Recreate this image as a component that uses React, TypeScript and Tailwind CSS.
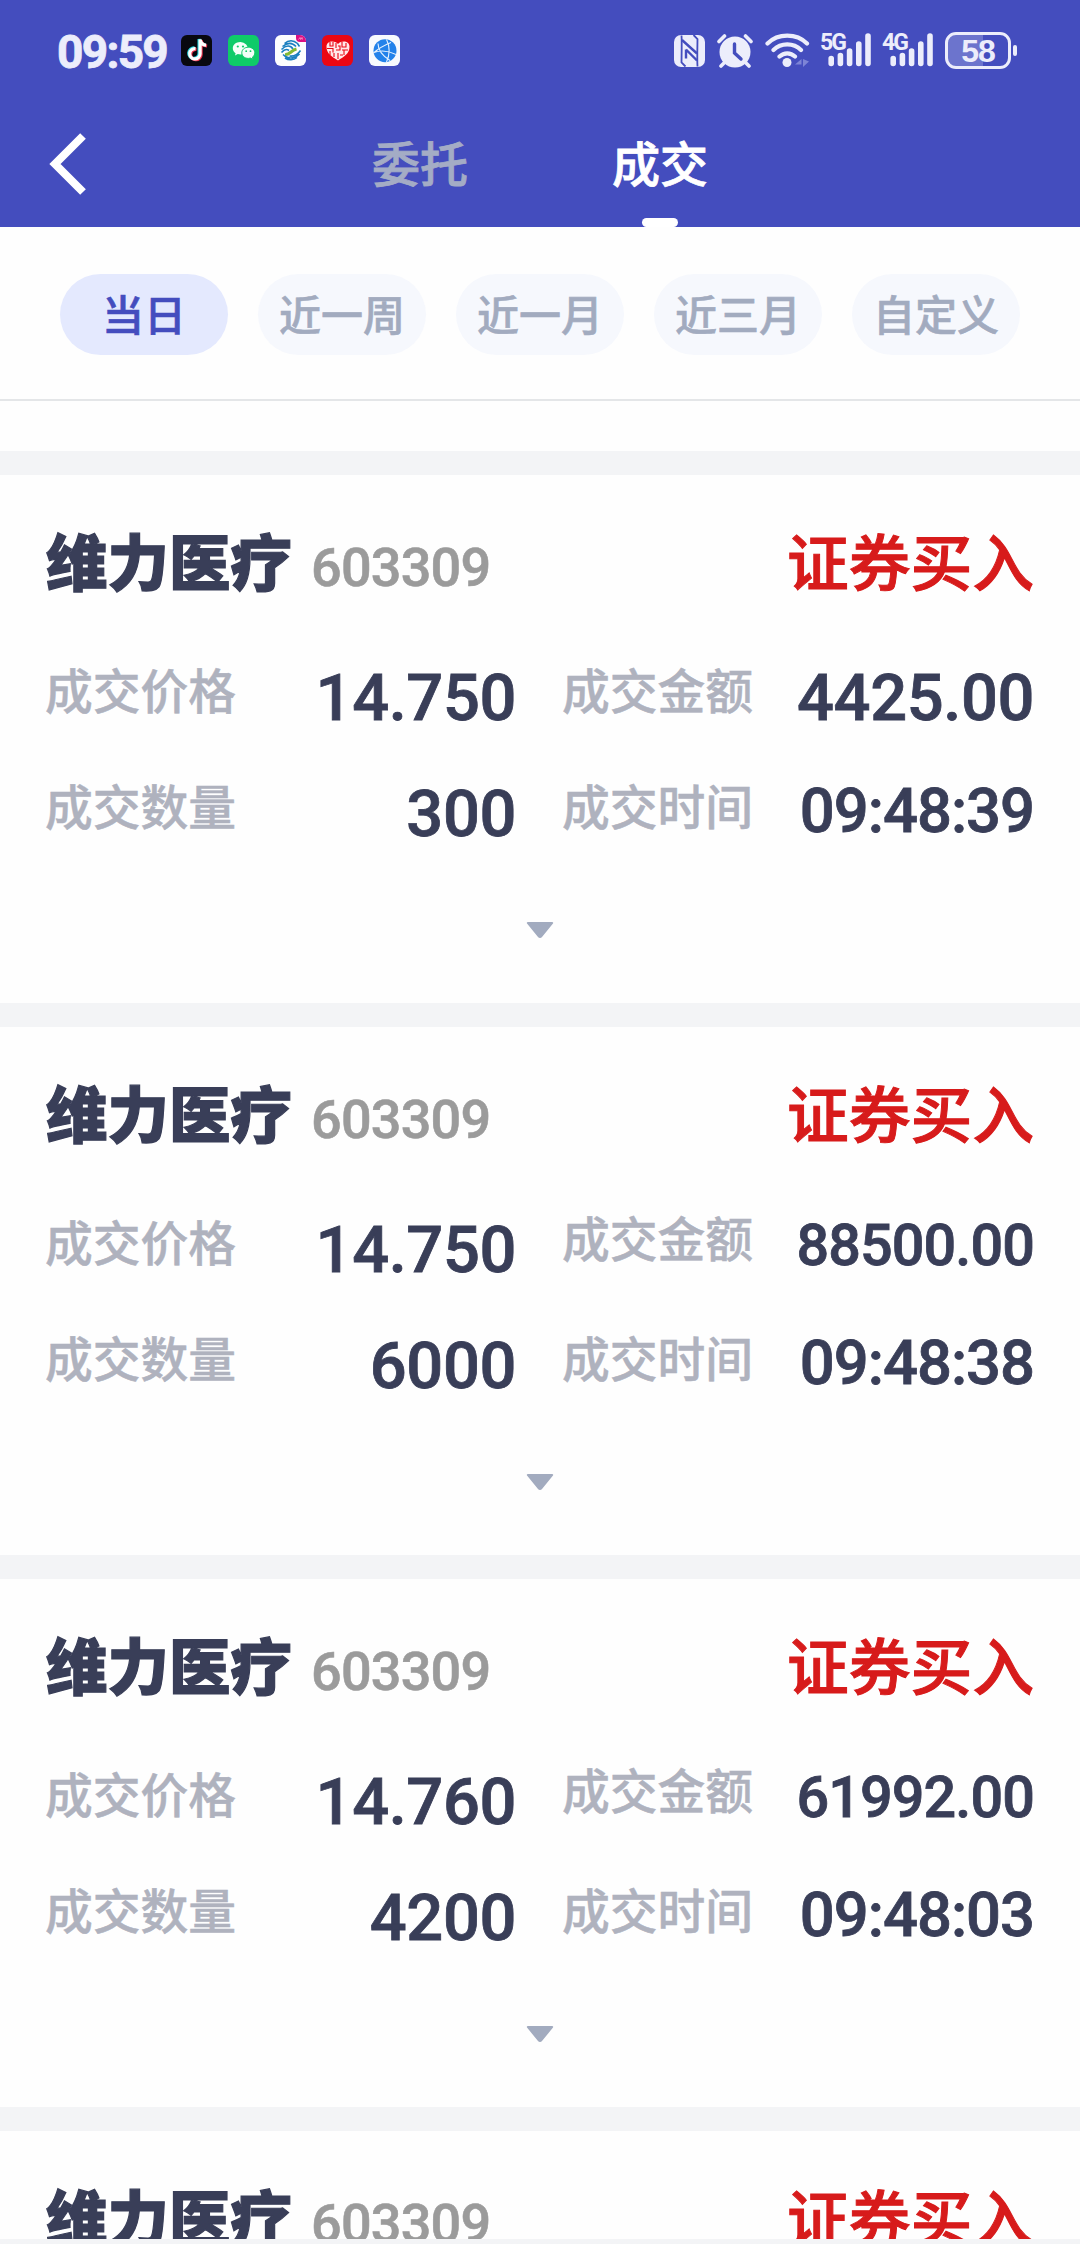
import clsx from "clsx";

type Trade = {
  name: string;
  code: string;
  side: string;
  price: string;
  amount: string;
  volume: string;
  time: string;
};

const trades: Trade[] = [
  { name: "维力医疗", code: "603309", side: "证券买入", price: "14.750", amount: "4425.00", volume: "300", time: "09:48:39" },
  { name: "维力医疗", code: "603309", side: "证券买入", price: "14.750", amount: "88500.00", volume: "6000", time: "09:48:38" },
  { name: "维力医疗", code: "603309", side: "证券买入", price: "14.760", amount: "61992.00", volume: "4200", time: "09:48:03" },
];

const ranges = ["当日", "近一周", "近一月", "近三月", "自定义"];

const AppBadges = () => (
  <div className="flex gap-4">
    <svg width="31" height="31" viewBox="0 0 31 31">
      <rect width="31" height="31" rx="6" fill="#08080f" />
      <g fill="none" strokeWidth="3.2">
        <path d="M14.500 13.600a5.200 5.200 0 1 0 4.600 5.200V4.500c.5 3.300 2.500 5.400 6 5.700" stroke="#25d5e0" transform="translate(-1 -.6)" />
        <path d="M14.500 13.600a5.200 5.200 0 1 0 4.600 5.200V4.500c.5 3.300 2.500 5.400 6 5.700" stroke="#f0344f" transform="translate(1 .8)" />
        <path d="M14.500 13.600a5.200 5.200 0 1 0 4.600 5.200V4.500c.5 3.300 2.500 5.400 6 5.700" stroke="#fff" />
      </g>
    </svg>
    <svg width="31" height="31" viewBox="0 0 31 31">
      <rect width="31" height="31" rx="6" fill="#0fcb68" />
      <path d="M12.300 7C8 7 4.800 9.800 4.800 13.300c0 2 1 3.700 2.800 4.900L7 20.500l2.800-1.400c3 .9 6.800.3 8.800-2.100 1.700-2.300 1.500-5.500-.4-7.500A8 8 0 0 0 12.300 7Z" fill="#f4fff8" />
      <path d="M20.300 12.200c-3.700 0-6.500 2.500-6.500 5.600s2.800 5.600 6.500 5.600c.8 0 1.500-.1 2.200-.3l2.500 1.300-.6-2.200c1.500-1 2.400-2.600 2.400-4.400 0-3.100-2.800-5.600-6.500-5.600Z" fill="#f4fff8" stroke="#0fcb68" />
      <g fill="#0fcb68">
        <circle cx="9.800" cy="11.500" r="1.100" />
        <circle cx="15" cy="11.500" r="1.100" />
        <circle cx="18.200" cy="16.200" r=".9" />
        <circle cx="22.500" cy="16.200" r=".9" />
      </g>
    </svg>
    <svg width="31" height="31" viewBox="0 0 31 31">
      <rect width="31" height="31" rx="6" fill="#fdfdfe" />
      <path d="M21 0h4a6 6 0 0 1 6 6v1h-6a4 4 0 0 1-4-4Z" fill="#dc0f83" />
      <path d="m23.500 4.500 1.500-2 .7 2 1.300-2 .5 2" fill="none" stroke="#fbd" strokeWidth=".7" />
      <g fill="none" strokeWidth="1.600">
        <path d="M9.500 8.500C13.500 5 18.500 5 22.500 8.500L24.500 11.500M7.500 11.500C13 7 17 7 21 11.500M6.500 14.500C11 10 15.500 10 18 14" stroke="#1b7fc0" />
        <path d="M6.500 17.500C10 18.500 12 16 14.500 13.500S20 11.500 25.500 13.500" stroke="#85b934" strokeWidth="0" />
        <path d="M10 19.500C15 20 15.500 15.500 21.500 14" stroke="#85b934" strokeWidth="3" />
        <path d="M6.500 17.500C9 14.500 12 14 14 15.500M25.500 15.500C22.500 20 18.500 21.500 14.500 21M24.500 19C20.500 23.500 14.500 24 10.500 21.500L8 19.500M22 22.500C18.500 25.500 13.500 25.500 10 23" stroke="#1b7fc0" />
      </g>
    </svg>
    <svg width="31" height="31" viewBox="0 0 31 31">
      <rect width="31" height="31" rx="6" fill="#eb0713" />
      <path d="M16 25.500C10 21.500 4.500 19 4.500 11.800 4.500 6 12 5 16 9c4-4 11.500-3 11.500 2.800C27.500 19 22 21.500 16 25.500Z" fill="#ffe9e9" />
      <path d="M8 7v4h3V7M14 8v5M5 13.500h6v4M14 15h4v-4h-2M20 7v5h4V8M20 15h6M22 15v5M12 18v4M16 18v6M18 20h3M8 16v4" fill="none" stroke="#eb0713" strokeWidth="1.100" />
    </svg>
    <svg width="31" height="31" viewBox="0 0 31 31">
      <rect width="31" height="31" rx="6" fill="#f8fafe" />
      <circle cx="16" cy="15.700" r="11.500" fill="#2382ea" />
      <path d="M17.500 4.500C21 11 21 20 17.500 27M4.500 18C11 12 17 9.500 22 7.500M5 17.500C12 15 20 16 27 19.500M9 8.500c0 7 4 12 12 17" fill="none" stroke="#e6f2ff" strokeWidth="1.100" />
    </svg>
  </div>
);

const Signal = ({ label }: { label: string }) => (
  <div className="flex h-[36px] w-[50px]">
    <span className="-ml-px mr-px w-0 whitespace-nowrap text-[23px] font-bold leading-[22px] tracking-[-2px] text-[#ecedfb]">{label}</span>
    <svg width="50" height="36" viewBox="0 0 50 36">
      <g stroke="#ecedfb" strokeWidth="5.600" strokeLinecap="round">
        <path d="M10.200 26.500v5M19.400 23.500v8M28.600 19v12.500M37.800 12v19.500M47 4v27.500" />
      </g>
    </svg>
  </div>
);

const StatusBar = () => (
  <div className="flex h-[102px] items-start justify-between pl-[57px] pr-[63px] pt-[32px]">
    <div className="flex items-start">
      <span className="mt-px w-[124px] text-[46px] font-bold leading-[38px] tracking-[-1.700px] text-[#ecedfb] [-webkit-text-stroke:0.8px]">
        09:59
      </span>
      <div className="mt-[3px]">
        <AppBadges />
      </div>
    </div>
    <div className="flex items-start">
      <svg className="mt-[2px]" width="31" height="34" viewBox="0 0 31 34">
        <rect y="1" width="31" height="32" rx="7" fill="#ecedfb" />
        <path d="M7.500 1.500C8 8 7.500 24 7.500 28.500l4 4M23.500 32.500C23 26 23.500 9 23.500 5l-4-4" fill="none" stroke="#444dbe" strokeWidth="1.800" />
        <path d="M8 6 23 19.500M12 15.500 23 26.500M12 15.500v9" fill="none" stroke="#444dbe" strokeWidth="2.400" />
      </svg>
      <svg className="ml-[12px] mt-px" width="36" height="36" viewBox="0 0 36 36">
        <path d="M2 8.500 7.500 3M34 8.500 28.500 3M8 29l-4 4M28 29l4 4" stroke="#ecedfb" strokeWidth="3.600" strokeLinecap="round" />
        <circle cx="18" cy="19" r="15.500" fill="#ecedfb" />
        <path d="M17.500 11v9l6.500 6" fill="none" stroke="#444dbe" strokeWidth="3.400" strokeLinecap="round" />
      </svg>
      <svg className="ml-[12px] mt-px" width="45" height="36" viewBox="0 0 45 36">
        <g fill="none" stroke="#ecedfb" strokeWidth="4.200" strokeLinecap="round">
          <path d="M2.500 10.500c10.500-10.500 29-10.500 39.500 0M8.500 17c7.500-7.500 20-7.500 27.500 0M14.500 23.500c4.500-4.300 11-4.300 15.500 0" />
        </g>
        <circle cx="22" cy="29.500" r="4.500" fill="#ecedfb" />
        <path d="M30 31.500h6.500V26ZM38 26v8l6-5.500Z" fill="#7d84d6" />
      </svg>
      <div className="ml-[11px]">
        <Signal label="5G" />
      </div>
      <div className="ml-[12px]">
        <Signal label="4G" />
      </div>
      <div className="ml-[12px] flex items-center">
        <div className="flex h-[37px] w-[66px] items-center justify-center rounded-[11px] border-[3px] border-[#ecedfb] bg-linear-to-r from-[#6c74cd] from-58% to-[#444dbe] to-58% font-['Liberation_Sans'] text-[32px] font-bold leading-none tracking-[-1px] text-[#ecedfb]">
          58
        </div>
        <div className="ml-[2px] h-[11px] w-[4px] rounded-full bg-[#ecedfb]" />
      </div>
    </div>
  </div>
);

const NavBar = () => (
  <div className="grid h-[125px] grid-cols-[300px_240px_240px_300px] text-center text-[48px] font-medium [-webkit-text-stroke:0.8px]">
    <div className="flex pl-[49px] pt-[31px]">
      <svg width="38" height="62" viewBox="0 0 38 62">
        <path d="M34 3 6 31l28 28" fill="none" stroke="#fff" strokeWidth="8" />
      </svg>
    </div>
    <div className="pt-[27px] leading-[74px] text-[#a4acc5]">委托</div>
    <div className="flex flex-col items-center justify-between pt-[27px] text-white">
      <span className="leading-[74px]">成交</span>
      <span className="h-[9px] w-[36px] rounded-[5px] bg-white" />
    </div>
  </div>
);

const RangeTabs = () => (
  <div className="flex h-[174px] items-start gap-[30px] border-b-2 border-[#e4e6e8] px-[60px] pt-[47px]">
    {ranges.map((range, i) => (
      <div
        key={range}
        className={clsx(
          "h-[81px] flex-1 rounded-full text-center text-[42px] font-medium leading-[85px] [-webkit-text-stroke:0.6px]",
          i === 0 ? "bg-[#e4e9fe] text-[#444dbe]" : "bg-[#f6f8fd] text-[#a2abbf]"
        )}
      >
        {range}
      </div>
    ))}
  </div>
);

const CardTitle = ({ name, code, side }: Pick<Trade, "name" | "code" | "side">) => (
  <div className="flex items-start justify-between">
    <div className="flex items-start">
      <span className="text-[61.500px] font-black leading-[86px] text-[#393e58] [-webkit-text-stroke:1.2px]">{name}</span>
      <span className="ml-[19px] mt-[10px] text-[54px] font-medium leading-[72px] tracking-[-0.800px] text-[#9b9b9b] [-webkit-text-stroke:0.6px]">{code}</span>
    </div>
    <span className="text-[61.750px] font-medium leading-[86px] text-[#d71b1b] [-webkit-text-stroke:1px]">{side}</span>
  </div>
);

const Label = ({ children, raised }: { children: string; raised?: boolean }) => (
  <span
    className={clsx(
      "-ml-px text-[47.750px] leading-[60px] tracking-normal text-[#afb2be] [-webkit-text-stroke:0.5px]",
      raised ? "mt-px" : "mt-[5px]"
    )}
  >
    {children}
  </span>
);

const TradeCard = ({ trade }: { trade: Trade }) => {
  // long amounts drop to a smaller size to stay on one line
  const long = trade.amount.length > 7;

  return (
    <div className="h-[552px] shrink-0 border-t-[24px] border-[#f3f4f6] px-[46px] pt-[47px]">
      <CardTitle name={trade.name} code={trade.code} side={trade.side} />
      <div className="mt-[50px] grid grid-cols-[470px_471px] gap-x-[47px] text-[65px] font-medium tracking-[-0.400px] text-[#393e58] [-webkit-text-stroke:0.8px]">
        <div className="flex h-[116px] justify-between">
          <Label>成交价格</Label>
          <span className="mt-[6px] leading-[68px]">{trade.price}</span>
        </div>
        <div className="flex h-[116px] justify-between">
          <Label raised={long}>成交金额</Label>
          <span className={clsx("leading-[68px]", long ? "mt-[2px] text-[57.500px] tracking-[-0.900px]" : "mt-[6px]")}>
            {trade.amount}
          </span>
        </div>
        <div className="flex h-[116px] justify-between">
          <Label>成交数量</Label>
          <span className="mt-[6px] leading-[68px]">{trade.volume}</span>
        </div>
        <div className="flex h-[116px] justify-between">
          <Label>成交时间</Label>
          <span className="mt-[3px] text-[61.500px] leading-[68px] tracking-[-1px]">{trade.time}</span>
        </div>
      </div>
      <svg className="mx-auto mt-[31px]" width="28" height="18" viewBox="0 0 28 18">
        <path d="M1.800 1h24.400a1 1 0 0 1 .8 1.600L16 16a2.500 2.500 0 0 1-4 0L1 2.600A1 1 0 0 1 1.800 1Z" fill="#a2abbf" />
      </svg>
    </div>
  );
};

const App = () => {
  return (
    <div className="flex h-[2244px] w-[1080px] flex-col overflow-hidden border-b-[5px] border-[#f3f4f6] bg-[#fefefe] font-[Roboto,'Noto_Sans_CJK_SC',sans-serif]">
      <header className="h-[227px] shrink-0 bg-[#444dbe]">
        <StatusBar />
        <NavBar />
      </header>
      <RangeTabs />
      <main className="mt-[50px] flex min-h-0 flex-1 flex-col overflow-hidden">
        {trades.map((trade, i) => (
          <TradeCard key={i} trade={trade} />
        ))}
        {/* next record, only its heading scrolled into view */}
        <div className="shrink-0 border-t-[24px] border-[#f3f4f6] px-[46px] pt-[47px]">
          <CardTitle name="维力医疗" code="603309" side="证券买入" />
        </div>
      </main>
    </div>
  );
};

export default App;
